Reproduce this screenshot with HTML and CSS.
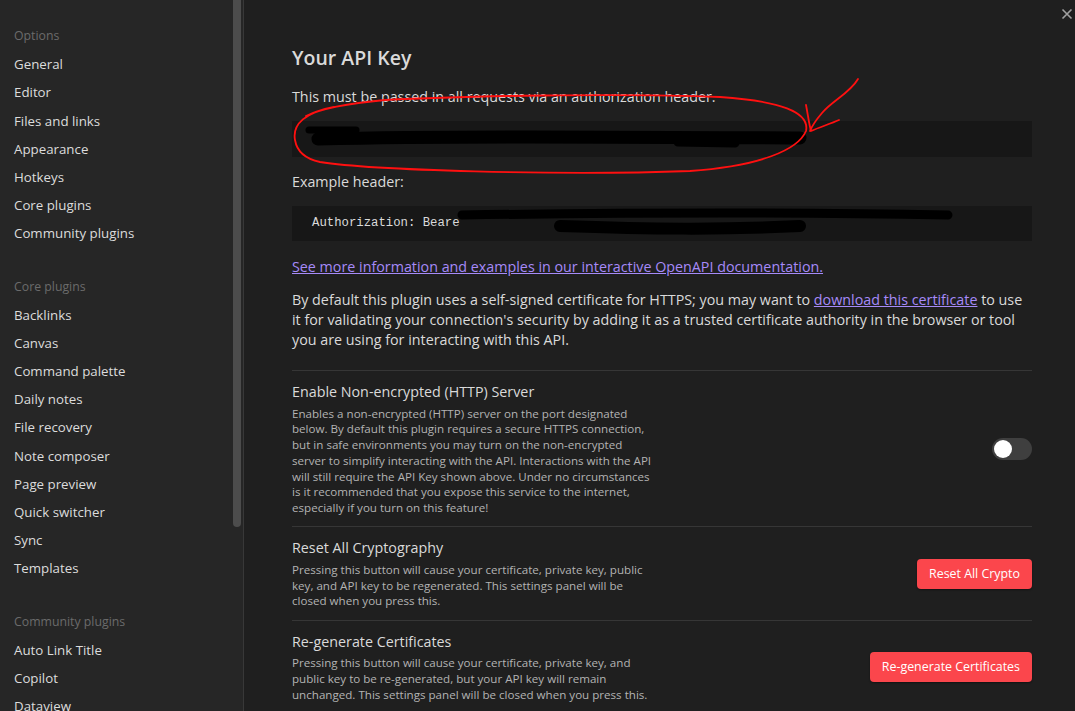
FILE: index.html
```html
<!DOCTYPE html>
<html>
<head>
<meta charset="utf-8">
<link rel="stylesheet" href="styles.css">
</head>
<body>
<div class="app">
  <nav class="sidebar">
    <div class="group">
      <div class="group-title">Options</div>
      <div class="item">General</div>
      <div class="item">Editor</div>
      <div class="item">Files and links</div>
      <div class="item">Appearance</div>
      <div class="item">Hotkeys</div>
      <div class="item">Core plugins</div>
      <div class="item">Community plugins</div>
    </div>
    <div class="group">
      <div class="group-title">Core plugins</div>
      <div class="item">Backlinks</div>
      <div class="item">Canvas</div>
      <div class="item">Command palette</div>
      <div class="item">Daily notes</div>
      <div class="item">File recovery</div>
      <div class="item">Note composer</div>
      <div class="item">Page preview</div>
      <div class="item">Quick switcher</div>
      <div class="item">Sync</div>
      <div class="item">Templates</div>
    </div>
    <div class="group">
      <div class="group-title">Community plugins</div>
      <div class="item">Auto Link Title</div>
      <div class="item">Copilot</div>
      <div class="item">Dataview</div>
    </div>
    <div class="scroll-thumb"></div>
  </nav>
  <main class="content">
    <h2 class="title">Your API Key</h2>
    <p class="text first">This must be passed in all requests via an authorization header.</p>
    <div class="keybox"></div>
    <p class="text">Example header:</p>
    <pre class="codebox">Authorization: Beare</pre>
    <p class="text"><a class="link">See more information and examples in our interactive OpenAPI documentation.</a></p>
    <p class="text para">By default this plugin uses a self-signed certificate for HTTPS; you may want to <a class="link">download this certificate</a> to use it for validating your connection's security by adding it as a trusted certificate authority in the browser or tool you are using for interacting with this API.</p>

    <div class="setting">
      <div class="info">
        <div class="name">Enable Non-encrypted (HTTP) Server</div>
        <div class="desc">Enables a non-encrypted (HTTP) server on the port designated<br>below. By default this plugin requires a secure HTTPS connection,<br>but in safe environments you may turn on the non-encrypted<br>server to simplify interacting with the API. Interactions with the API<br>will still require the API Key shown above. Under no circumstances<br>is it recommended that you expose this service to the internet,<br>especially if you turn on this feature!</div>
      </div>
      <div class="control"><div class="toggle"><div class="knob"></div></div></div>
    </div>

    <div class="setting">
      <div class="info">
        <div class="name">Reset All Cryptography</div>
        <div class="desc">Pressing this button will cause your certificate, private key, public<br>key, and API key to be regenerated. This settings panel will be<br>closed when you press this.</div>
      </div>
      <div class="control"><button class="btn">Reset All Crypto</button></div>
    </div>

    <div class="setting">
      <div class="info">
        <div class="name">Re-generate Certificates</div>
        <div class="desc">Pressing this button will cause your certificate, private key, and<br>public key to be re-generated, but your API key will remain<br>unchanged. This settings panel will be closed when you press this.</div>
      </div>
      <div class="control"><button class="btn">Re-generate Certificates</button></div>
    </div>
  </main>
  <div class="close">
    <svg width="12" height="12" viewBox="0 0 12 12"><path d="M1.5 1.5 L10.5 10.5 M10.5 1.5 L1.5 10.5" stroke="#a0a0a0" stroke-width="1.6" fill="none"/></svg>
  </div>
  <svg class="annot" width="1075" height="711" viewBox="0 0 1075 711">
    <g stroke="#000" fill="none" stroke-linecap="round">
      <path d="M309 130 L356 130" stroke-width="7"/>
      <path d="M318 139 C450 136 600 137 800 138" stroke-width="13"/>
      <path d="M678 142 L735 143" stroke-width="9"/>
      <path d="M462 215 C600 213 800 212 948 215" stroke-width="9"/>
      <path d="M560 226 C650 229 720 230 800 226" stroke-width="12"/>
    </g>
    <g stroke="#ff1010" fill="none" stroke-width="1.8" stroke-linecap="round" stroke-linejoin="round">
      <path d="M334 107 C306 112 292 124 295 140 C297 152 306 159 320 162 C370 170 560 176 690 171 C760 166 798 150 806 131 C810 112 780 101 720 97 C620 93 460 96 385 100 C352 103 322 108 306 116"/>
      <path d="M858 79 C850 93 832 101 822 113 C816 120 812 126 810 131"/>
      <path d="M806 105 C808 115 809 124 811 131 C820 127 830 124 839 120"/>
    </g>
  </svg>
</div>
</body>
</html>
```
FILE: styles.css
```css
* { box-sizing: border-box; }
html, body {
  margin: 0;
  padding: 0;
  width: 1075px;
  height: 711px;
  overflow: hidden;
  background: #1f1f1f;
  font-family: "Open Sans", "Noto Sans", sans-serif;
  color: #dadada;
}
.app {
  position: relative;
  display: flex;
  width: 1075px;
  height: 711px;
}
.sidebar {
  position: relative;
  width: 244px;
  flex: none;
  background: #262626;
  border-right: 1px solid #383838;
  padding: 22px 0 0 14px;
  overflow: hidden;
}
.group + .group { margin-top: 25px; }
.group-title {
  height: 28.2px;
  line-height: 28.2px;
  font-size: 12.3px;
  color: #6b6b6b;
}
.item {
  height: 28.2px;
  line-height: 28.2px;
  font-size: 13.3px;
  color: #dcdcdc;
  white-space: nowrap;
}
.scroll-thumb {
  position: absolute;
  left: 233px;
  top: 0;
  width: 8px;
  height: 527px;
  background: #4c4c4c;
  border-radius: 0 0 4px 4px;
}
.content {
  flex: 1;
  padding: 46px 43px 0 48px;
  overflow: hidden;
}
.title {
  margin: 0;
  font-size: 19.5px;
  line-height: 24px;
  font-weight: 600;
  color: #dadada;
}
.text {
  margin: 0;
  font-size: 14.3px;
  line-height: 20px;
  color: #dadada;
}
.text.first { margin-top: 17px; }
.keybox {
  margin-top: 14px;
  height: 36px;
  background: #171717;
}
.keybox + .text { margin-top: 15px; }
.codebox {
  margin: 14px 0 0;
  height: 35px;
  padding: 0 20px;
  line-height: 35px;
  background: #171717;
  font-family: "Liberation Mono", monospace;
  font-size: 12.3px;
  color: #dadada;
}
.codebox + .text { margin-top: 16px; }
.link {
  color: #a68af9;
  text-decoration: underline;
}
.text.para { margin-top: 13px; }
.setting {
  display: flex;
  align-items: center;
  border-top: 1px solid #363636;
  padding: 11px 0 10.5px;
}
.text.para + .setting { margin-top: 20px; }
.info { flex: 1; }
.name {
  font-size: 14.3px;
  line-height: 20px;
  color: #dadada;
}
.desc {
  margin-top: 3.5px;
  font-size: 11.6px;
  line-height: 15.75px;
  color: #b3b3b3;
}
.control {
  display: flex;
  justify-content: flex-end;
  flex: none;
}
.toggle {
  width: 40px;
  height: 22px;
  border-radius: 11px;
  background: #3f3f3f;
  padding: 2px;
}
.knob {
  width: 18px;
  height: 18px;
  border-radius: 50%;
  background: #fff;
}
.btn {
  height: 30px;
  padding: 0 12px;
  border: none;
  border-radius: 4px;
  background: #fb464c;
  color: #fff;
  font-family: "Open Sans", "Noto Sans", sans-serif;
  font-size: 12.4px;
  box-shadow: 0 1px 2px rgba(0,0,0,0.4);
}
.close {
  position: absolute;
  top: 8px;
  right: 2px;
  width: 12px;
  height: 12px;
}
.close svg { display: block; }
.annot {
  position: absolute;
  left: 0;
  top: 0;
  pointer-events: none;
}
```
